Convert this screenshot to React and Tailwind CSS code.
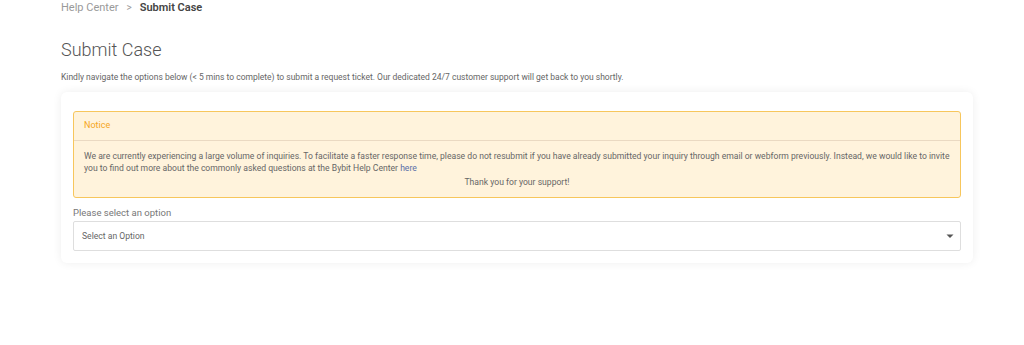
export default function App() {
  return (
    <div className="min-h-[345px] bg-white pl-[61px] pr-[51px] font-['Roboto',sans-serif] text-[#555]">
      {/* breadcrumb */}
      <div className="flex items-center gap-[7px] pt-px text-[11px] leading-[14px]">
        <span className="text-[#9a9a9a]">Help Center</span>
        <span className="px-[1px] text-[10px] text-[#9a9a9a]">&gt;</span>
        <span className="font-semibold text-[#444]">Submit Case</span>
      </div>

      <h1 className="mt-[24px] text-[18px] leading-[22px] font-light text-[#555]">Submit Case</h1>
      <p className="mt-[10px] text-[8.5px] leading-[12px] text-[#666]">
        Kindly navigate the options below (&lt; 5 mins to complete) to submit a request ticket. Our dedicated 24/7 customer support will get back to you shortly.
      </p>

      <div className="mt-[9px] rounded-md bg-white px-3 pt-[19px] pb-[12px] shadow-[0_0_10px_rgba(0,0,0,0.07)]">
        <div className="rounded-[3px] border border-[#f7c65c] bg-[#fff3dc]">
          <div className="flex h-[29px] items-center border-b border-[#ead9c2] px-[10px] text-[9px] text-[#f5a623]">
            Notice
          </div>
          <div className="px-[10px] pt-[9px] pb-[9px] text-[8.6px] leading-[12px] text-[#666]">
            <p>
              We are currently experiencing a large volume of inquiries. To facilitate a faster response time, please do not resubmit if you have already submitted your inquiry through email or webform previously. Instead, we would like to invite you to find out more about the commonly asked questions at the Bybit Help Center{" "}
              <a className="text-[#5a6fa8]">here</a>
            </p>
            <p className="mt-[2px] text-center">Thank you for your support!</p>
          </div>
        </div>

        <div className="mt-[9px] text-[9.5px] leading-[12px] text-[#777]">Please select an option</div>
        <div className="mt-[2px] flex h-[30px] items-center justify-between rounded-[2px] border border-[#dedede] bg-white pl-[8px] pr-[5px] text-[8.6px] text-[#666]">
          <span>Select an Option</span>
          <svg width="10" height="10" viewBox="0 0 10 10">
            <path d="M1.5 3.5 L8.5 3.5 L5 7 Z" fill="#555" />
          </svg>
        </div>
      </div>
    </div>
  );
}
